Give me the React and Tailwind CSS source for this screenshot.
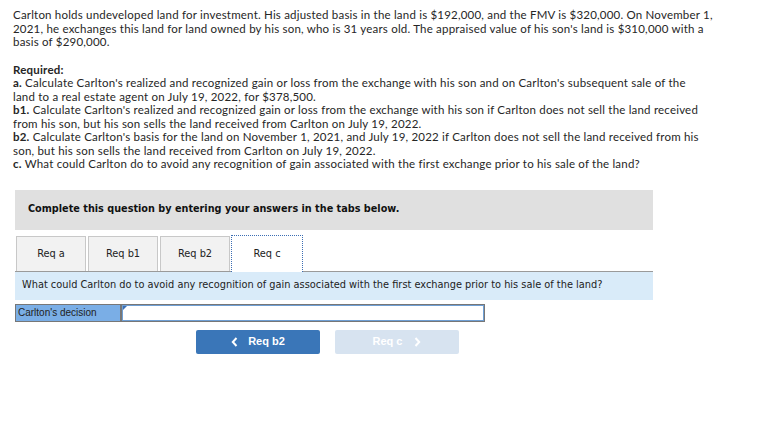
export default function App() {
  const tabs = ['Req a', 'Req b1', 'Req b2'];

  return (
    <div className="w-[780px] h-[425px] bg-white pt-[8px] text-[#222]">
      {/* question text */}
      <div className="pl-[13px] font-['Lato',sans-serif] text-[11.5px] tracking-[0.2px] leading-[13.5px] whitespace-nowrap text-[#262626]">
        <p>
          Carlton holds undeveloped land for investment. His adjusted basis in the land is $192,000, and the FMV is $320,000. On November 1,
          <br />
          2021, he exchanges this land for land owned by his son, who is 31 years old. The appraised value of his son's land is $310,000 with a
          <br />
          basis of $290,000.
        </p>
        <p className="mt-[14px]">
          <b>Required:</b>
          <br />
          <b>a.</b> Calculate Carlton's realized and recognized gain or loss from the exchange with his son and on Carlton's subsequent sale of the
          <br />
          land to a real estate agent on July 19, 2022, for $378,500.
          <br />
          <b>b1.</b> Calculate Carlton's realized and recognized gain or loss from the exchange with his son if Carlton does not sell the land received
          <br />
          from his son, but his son sells the land received from Carlton on July 19, 2022.
          <br />
          <b>b2.</b> Calculate Carlton's basis for the land on November 1, 2021, and July 19, 2022 if Carlton does not sell the land received from his
          <br />
          son, but his son sells the land received from Carlton on July 19, 2022.
          <br />
          <b>c.</b> What could Carlton do to avoid any recognition of gain associated with the first exchange prior to his sale of the land?
        </p>
      </div>

      <div className="ml-[15px] w-[638px] mt-[19px] font-['DejaVu_Sans',sans-serif]">
        <div className="h-[40px] bg-[#e0e0e0] flex items-center pl-[13px] text-[9.7px] font-bold text-[#111]">
          Complete this question by entering your answers in the tabs below.
        </div>

        {/* tabs */}
        <div className="mt-[5px] flex items-end gap-[2px] pl-[1px] border-b border-[#9a9a9a]">
          {tabs.map(t => (
            <div
              key={t}
              className="w-[70px] h-[35px] pt-[2px] bg-[#f2f2f2] border border-b-0 border-[#c8c8c8] flex items-center justify-center text-[9.8px] text-[#222]"
            >
              {t}
            </div>
          ))}
          <div className="-ml-[1px] -mb-[1px] w-[72px] h-[37px] pt-[1px] bg-white border border-dotted border-b-0 border-[#3b6eb4] flex items-center justify-center text-[9.8px] text-[#222]">
            Req c
          </div>
        </div>

        <div className="h-[28px] bg-[#d9ebf9] flex items-center pl-[7px] text-[9.8px] text-[#222]">
          What could Carlton do to avoid any recognition of gain associated with the first exchange prior to his sale of the land?
        </div>

        {/* answer row */}
        <div className="mt-[4px] flex h-[18px] font-['Liberation_Sans',sans-serif]">
          <div className="w-[106px] bg-[#7aaee6] border border-[#777] flex items-center pl-[2px] text-[10px] text-[#222]">
            Carlton's decision
          </div>
          <div className="relative w-[364px] border border-[#777] bg-white">
            <div className="absolute inset-0 border border-[#6f9fd4]" />
            <div className="absolute top-[1px] left-[1px] w-0 h-0 border-t-[4px] border-r-[4px] border-t-[#3b6eb4] border-r-transparent" />
          </div>
        </div>

        {/* nav buttons */}
        <div className="mt-[8px] flex gap-[15px] pl-[181px] font-['Liberation_Sans',sans-serif]">
          <div className="w-[124px] h-[24px] rounded-[2px] bg-[#3a76b8] text-white text-[11px] font-bold flex items-center justify-center gap-[10px]">
            <svg width="7" height="10" viewBox="0 0 7 10">
              <path d="M5.5 1 L1.8 5 L5.5 9" stroke="white" strokeWidth="2" fill="none" />
            </svg>
            <span>Req b2</span>
          </div>
          <div className="w-[124px] h-[24px] rounded-[2px] bg-[#d7e3f0] text-white text-[11px] font-bold flex items-center justify-center gap-[12px]">
            <span>Req c</span>
            <svg width="7" height="10" viewBox="0 0 7 10">
              <path d="M1.5 1 L5.2 5 L1.5 9" stroke="white" strokeWidth="2" fill="none" />
            </svg>
          </div>
        </div>
      </div>
    </div>
  );
}
